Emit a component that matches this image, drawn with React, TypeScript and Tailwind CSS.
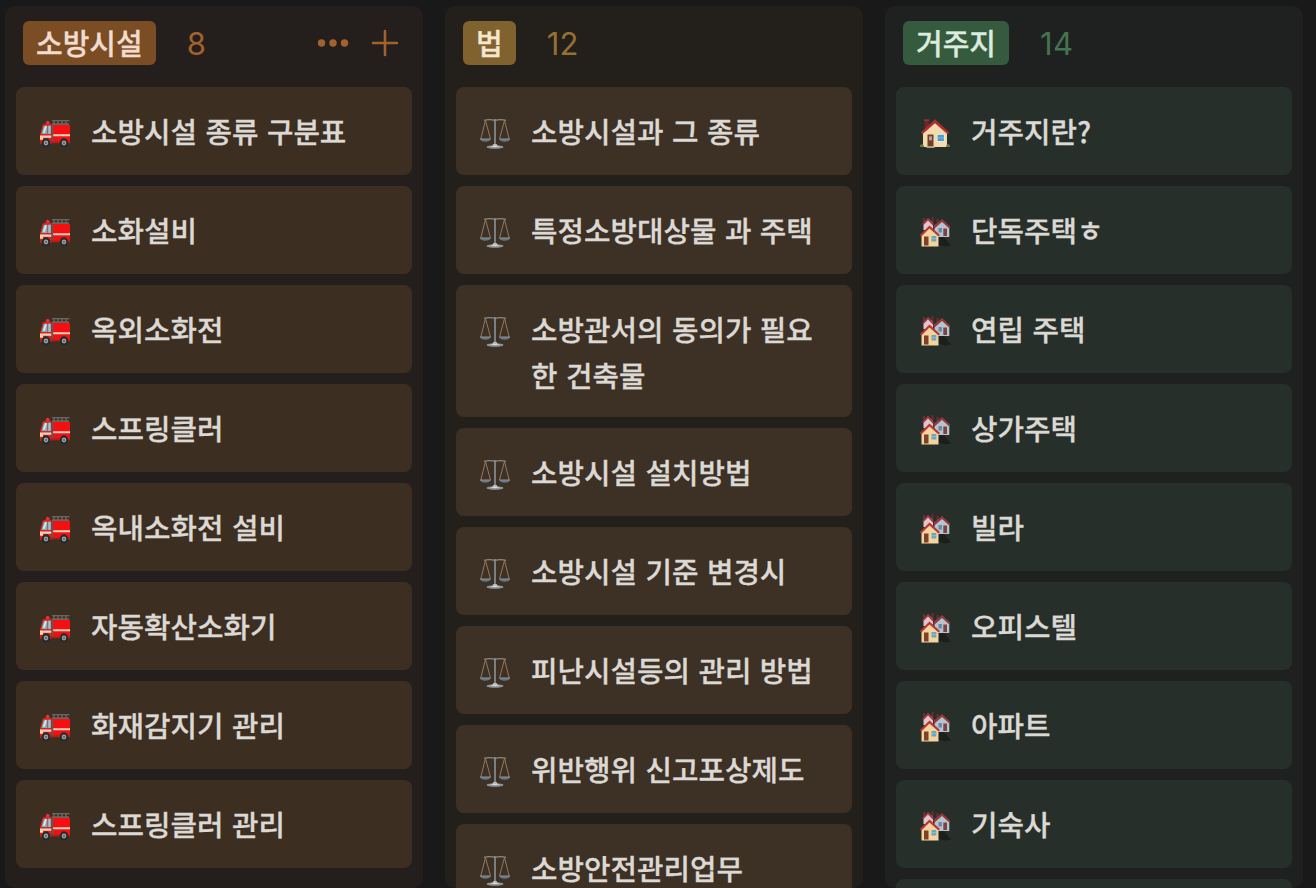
import type { ReactNode } from "react";

function FireEngine() {
  return (
    <svg viewBox="0 1.4 32 29.5" preserveAspectRatio="none" className="h-8 w-8">
      <path d="M13 4.9h17.5M13 8h17M15 5v3M19 5v3M23 5v3M27 5v3" stroke="#777a7a" strokeWidth="1" fill="none" />
      <path d="M7 6.2q1.5-2.6 3.4 0v2H7z" fill="#e8333a" />
      <path d="M6 7.6h6.5V26H1V17.5L3.6 9q.6-1.4 2.4-1.4z" fill="#e0211c" />
      <path d="M13 8.8h18V25H13z" fill="#f50f10" />
      <path d="M5.4 9.4h3V17H2.5l2-6.6q.2-1 .9-1z" fill="#6fb6c5" />
      <path d="M9.2 9.4h2.6V17H9.2z" fill="#93c9d2" />
      <path d="M6 10h1.8l-2 6H3.8z" fill="#d8eef0" />
      <path d="M12.3 9h2v16h-2z" fill="#6d5350" />
      <path d="M1 18.5h11.3v2H1zM14.3 17.3H31v1.9H14.3z" fill="#f6d3bf" />
      <path d="M1 20.3h3v2H1z" fill="#ffe8a0" />
      <path d="M1 24h30v1.6H1z" fill="#a8211c" />
      <circle cx="7" cy="25.3" r="4.2" fill="#252a2d" />
      <circle cx="7" cy="25.3" r="2.3" fill="#98a0a4" />
      <circle cx="7" cy="25.3" r="0.9" fill="#4d5558" />
      <circle cx="25" cy="25.3" r="4.2" fill="#252a2d" />
      <circle cx="25" cy="25.3" r="2.3" fill="#98a0a4" />
      <circle cx="25" cy="25.3" r="0.9" fill="#4d5558" />
    </svg>
  );
}

function Scales() {
  return (
    <svg viewBox="0 0 32 32" className="h-8 w-8" fill="none">
      <path d="M5 3.3q5.5-1.2 11 0q5.5-1.2 11 0" stroke="#8b8a86" strokeWidth="1.3" />
      <path d="M6.5 3.5 1.8 22M6.5 3.5 11.5 22M25.5 3.5 20.5 22M25.5 3.5 30.2 22" stroke="#94795c" strokeWidth="1" />
      <path d="M16 2v26" stroke="#858d92" strokeWidth="1.7" />
      <path d="M.8 21.8h11.2q-1 3-5.6 3t-5.6-3zM20 21.8h11.2q-1 3-5.6 3t-5.6-3z" fill="#647581" />
      <path d="M1 22h10.500M20.500 22H31" stroke="#98a3aa" strokeWidth="0.7" />
      <path d="M14.3 27h3.400l1 2.500h-5.400z" fill="#b9bfc1" />
      <ellipse cx="16" cy="30" rx="8.5" ry="1.7" fill="#8f9698" />
      <path d="M11 29.3q5-1.8 10 0l-5 .9z" fill="#dedfdb" />
    </svg>
  );
}

function House() {
  return (
    <svg viewBox="0 0 32 32" className="h-8 w-8">
      <path d="M5.5 3.5h4.3v9H5.5z" fill="#6d2727" />
      <path d="M5 2.3h5.3v1.7H5z" fill="#8a3836" />
      <path d="M4 14.5 16 4l12 10.5V30H4z" fill="#f3dbad" />
      <path d="M1.8 15.5 16 2.3l14.2 13.2-1.6 1.7L16 6.3 3.4 17.2z" fill="#b02c32" />
      <path d="M8.5 17.5h6v12h-6z" fill="#783b28" />
      <path d="M10 19.3h3v4h-3z" fill="#9baaa5" />
      <path d="M17.8 17h7.8v7.8h-7.8z" fill="#e8f0e9" />
      <path d="M18.6 17.8h6.3v6.2h-6.3z" fill="#4d9dd2" />
      <path d="M18.6 20.9h6.3" stroke="#84c5e4" strokeWidth=".7" />
      <path d="M7.5 29.5h8v1.5h-8z" fill="#b0a28b" />
      <path d="M.8 30q-.2-2.4 2.2-3Q5 27.5 5 30zM27 30q0-2.5 2-3 2.3.6 2.1 3z" fill="#637d3e" />
    </svg>
  );
}

function Houses() {
  return (
    <svg viewBox="0 0 32 32" className="h-8 w-8">
      <path d="m18 20.500 5-1.500 9 10.500-6 1-7-2z" fill="#1c1f1c" />
      <path d="M4 2h2v4H4zM12.500 1h2v5h-2zM17.500 3h2v5h-2z" fill="#692e31" />
      <path d="M4.500 7.500 9 2.500l5 4.500V14H4.500z" fill="#ddc7cd" />
      <path d="m3 8 6-6 6 6-1.200 1.400L9 4.500 4.500 9z" fill="#a3373d" />
      <path d="M15.500 9.500 23 4l7.300 6.500V21H15.500z" fill="#b5c5d0" />
      <path d="M14 10.800 23 3l8.300 7.800-1.300 1.500L23 6l-7.500 6.500z" fill="#98363c" />
      <path d="M24.300 12.500h3.700V20h-3.700z" fill="#7e4240" />
      <path d="M19.500 12h3.400v4.500h-3.400z" fill="#6589a5" />
      <path d="M2.500 18.500 10.500 11l9 7.500v12h-17z" fill="#f2d49c" />
      <path d="M.8 19 10.500 9.500 21 19l-1.500 1.500-9-8-8.200 8z" fill="#b93534" />
      <path d="M5 20.500h4.500v9H5z" fill="#804029" />
      <path d="M12.500 20h4.800v5.500h-4.800z" fill="#68a6c6" />
      <path d="M12.500 22.700h4.800" stroke="#a1cbd5" strokeWidth=".7" />
    </svg>
  );
}

type ColumnProps = {
  title: string;
  count: number;
  column: string;
  badge: string;
  countColor: string;
  card: string;
  items: string[];
  icon: (index: number) => ReactNode;
  actions?: ReactNode;
};

function Column({ title, count, column, badge, countColor, card, items, icon, actions }: ColumnProps) {
  return (
    <section className={`w-[418px] shrink-0 rounded-[10px] px-[11px] ${column}`}>
      <header className="flex h-[81px] items-start pt-[15px] pl-[7px]">
        <h2 className={`h-11 rounded-[6px] px-[13px] text-[29px] leading-[43px] font-medium [-webkit-text-stroke:0.3px_currentColor] ${badge}`}>{title}</h2>
        <span className={`ml-[31px] font-[Inter] text-[31px] leading-[46px] tracking-[0.3px] ${countColor}`}>{count}</span>
        {actions}
      </header>
      <ul className="flex flex-col gap-[11px]">
        {items.map((item, index) => (
          <li
            key={item}
            className={`flex shrink-0 items-start rounded-[8px] pl-[23px] ${item.includes("\n") ? "h-[132px]" : "h-[88px]"} ${card}`}
          >
            <span className="mt-[30px] h-8 w-8 shrink-0">{icon(index)}</span>
            <span className="mt-[21px] ml-5 text-[28.8px] leading-[46px] font-medium whitespace-pre text-[#dcd9d5] [word-spacing:0.4px] [-webkit-text-stroke:0.3px_currentColor]">{item}</span>
          </li>
        ))}
      </ul>
    </section>
  );
}

const facilities = ["소방시설 종류 구분표", "소화설비", "옥외소화전", "스프링클러", "옥내소화전 설비", "자동확산소화기", "화재감지기 관리", "스프링클러 관리"];
const laws = ["소방시설과 그 종류", "특정소방대상물 과 주택", "소방관서의 동의가 필요\n한 건축물", "소방시설 설치방법", "소방시설 기준 변경시", "피난시설등의 관리 방법", "위반행위 신고포상제도", "소방안전관리업무"];
const residences = ["거주지란?", "단독주택ㅎ", "연립 주택", "상가주택", "빌라", "오피스텔", "아파트", "기숙사", ""];

export default function App() {
  return (
    <main lang="ko" className="flex h-[888px] w-[1316px] gap-[22px] overflow-hidden bg-[#191919] pt-[6px] pl-[5px] font-['Noto_Sans_CJK_KR',sans-serif]">
      <Column
        title="소방시설"
        count={8}
        column="bg-[#241f1c]"
        badge="bg-[#7b4d25] text-[#f1ddd0]"
        countColor="text-[#a3622d]"
        card="bg-[#3d2e22]"
        items={facilities}
        icon={() => <FireEngine />}
        actions={
          <div className="mt-[7px] mr-[13px] ml-auto flex items-center gap-[22px] text-[#a3622d]">
            <svg viewBox="0 0 32 30" className="h-[30px] w-8" fill="currentColor">
              <circle cx="4.5" cy="15" r="3.7" />
              <circle cx="16" cy="15" r="3.7" />
              <circle cx="27.5" cy="15" r="3.7" />
            </svg>
            <svg viewBox="0 0 28 28" className="h-7 w-7" stroke="currentColor" strokeWidth="2.6" strokeLinecap="round">
              <path d="M14 2v24M2 14h24" />
            </svg>
          </div>
        }
      />
      <Column
        title="법"
        count={12}
        column="bg-[#23201b]"
        badge="bg-[#80622f] text-[#f4e6cf]"
        countColor="text-[#967033]"
        card="bg-[#3d3025]"
        items={laws}
        icon={() => <Scales />}
      />
      <Column
        title="거주지"
        count={14}
        column="bg-[#1e2120]"
        badge="bg-[#355a3e] text-[#dcebdd]"
        countColor="text-[#43734f]"
        card="bg-[#262f29]"
        items={residences}
        icon={(index) => (index === 0 ? <House /> : <Houses />)}
      />
    </main>
  );
}
